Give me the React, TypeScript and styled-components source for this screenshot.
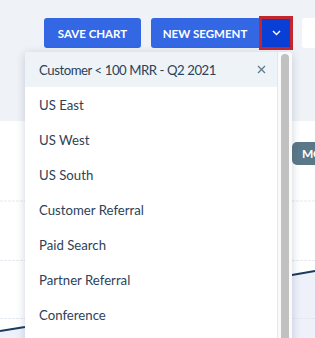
import React from "react";
import styled, { createGlobalStyle } from "styled-components";

const Global = createGlobalStyle`
  html, body { margin: 0; padding: 0; background: #eff2f7; overflow: hidden; }
  * { box-sizing: border-box; }
`;

const Page = styled.div`
  position: relative;
  width: 315px;
  height: 338px;
  overflow: hidden;
  font-family: Lato, "Noto Sans", sans-serif;
  background: #eff2f7;
`;

const Header = styled.div`
  height: 121px;
  display: flex;
  align-items: flex-start;
  padding: 16px 0 0 44px;
`;

const Toolbar = styled.div`
  display: flex;
  align-items: center;
  height: 34px;
`;

const Button = styled.button<{ $w: number }>`
  width: ${(p) => p.$w}px;
  height: 30px;
  border: none;
  border-radius: 3px;
  background: #3367e3;
  color: #fff;
  font-family: Lato, sans-serif;
  font-weight: 700;
  font-size: 11.5px;
  letter-spacing: 0;
  text-transform: uppercase;
  padding: 0;
  display: flex;
  align-items: center;
  justify-content: center;
`;

const SplitMain = styled(Button)`
  margin-left: 10px;
  border-radius: 3px 0 0 3px;
`;

const SplitToggle = styled.button`
  width: 34px;
  height: 34px;
  border: 3px solid #c4262e;
  background: #0a3fd6;
  padding: 0;
  display: flex;
  align-items: center;
  justify-content: center;
`;

const SideInput = styled.div`
  width: 20px;
  height: 30px;
  margin-left: 9px;
  background: #fff;
  border-radius: 3px;
`;

const ChartCard = styled.div`
  position: relative;
  height: 217px;
  background: #fff;
`;

const Badge = styled.div`
  position: absolute;
  left: 292px;
  top: 21px;
  height: 23px;
  padding: 0 8px 0 10px;
  border-radius: 5px;
  background: #5b7888;
  color: #fff;
  font-weight: 700;
  font-size: 12px;
  letter-spacing: -0.4px;
  display: flex;
  align-items: center;
  white-space: nowrap;
`;

const ChartSvg = styled.svg`
  display: block;
`;

const Menu = styled.div`
  position: absolute;
  left: 25px;
  top: 52px;
  width: 267px;
  height: 300px;
  background: #fff;
  border-radius: 4px 4px 0 0;
  box-shadow: 0 2px 10px rgba(40, 60, 90, 0.22);
  overflow: hidden;
  display: flex;
`;

const List = styled.div`
  flex: 1;
  min-width: 0;
`;

const ScrollTrack = styled.div`
  width: 15px;
  flex: none;
  background: #fafafa;
  border-left: 1px solid #e6e6e6;
  padding: 2px 3px 0 3px;
`;

const ScrollThumb = styled.div`
  width: 8px;
  height: 100%;
  background: #c1c1c1;
  border-radius: 4px 4px 0 0;
`;

const Item = styled.div<{ $active?: boolean }>`
  height: 35px;
  display: flex;
  align-items: center;
  justify-content: space-between;
  padding: 0 11px 0 14px;
  background: ${(p) => (p.$active ? "#eef3f8" : "#fff")};
  color: #2d4256;
  font-size: 13.2px;
  letter-spacing: ${(p) => (p.$active ? "-0.45px" : "0")};
  white-space: nowrap;
`;

const Close = styled.span`
  display: flex;
  color: #5f7b8b;
`;

const items = [
  "US East",
  "US West",
  "US South",
  "Customer Referral",
  "Paid Search",
  "Partner Referral",
  "Conference",
];

export default function App() {
  return (
    <Page>
      <Global />
      <Header>
        <Toolbar>
          <Button $w={97}>Save Chart</Button>
          <SplitMain $w={108}>New Segment</SplitMain>
          <SplitToggle aria-label="More">
            <svg width="9" height="6" viewBox="0 0 9 6">
              <path d="M1 1l3.5 3.5L8 1" stroke="#fff" strokeWidth="1.4" fill="none" />
            </svg>
          </SplitToggle>
          <SideInput />
        </Toolbar>
      </Header>
      <ChartCard>
        <ChartSvg width="315" height="217" viewBox="0 0 315 217">
          <path d="M0 210 L25 206 L150 180 L292 154 L315 150 L315 217 L0 217 Z" fill="#eef1fa" />
          <line x1="0" y1="80" x2="315" y2="80" stroke="#e6e9ee" strokeDasharray="3 1" />
          <line x1="0" y1="139.5" x2="315" y2="139.5" stroke="#e6e9ee" strokeDasharray="3 1" />
          <line x1="0" y1="197.5" x2="315" y2="197.5" stroke="#e3e7ef" strokeDasharray="3 1" />
          <path d="M0 210 L25 206 L150 180 L292 154 L315 150" stroke="#1b3a5c" strokeWidth="2" fill="none" />
        </ChartSvg>
        <Badge>MONTHLY</Badge>
      </ChartCard>
      <Menu>
        <List>
          <Item $active>
            <span>Customer &lt; 100 MRR - Q2 2021</span>
            <Close>
              <svg width="9" height="9" viewBox="0 0 9 9">
                <path d="M1 1l7 7M8 1L1 8" stroke="currentColor" strokeWidth="1.3" />
              </svg>
            </Close>
          </Item>
          {items.map((t) => (
            <Item key={t}>{t}</Item>
          ))}
        </List>
        <ScrollTrack>
          <ScrollThumb />
        </ScrollTrack>
      </Menu>
    </Page>
  );
}
